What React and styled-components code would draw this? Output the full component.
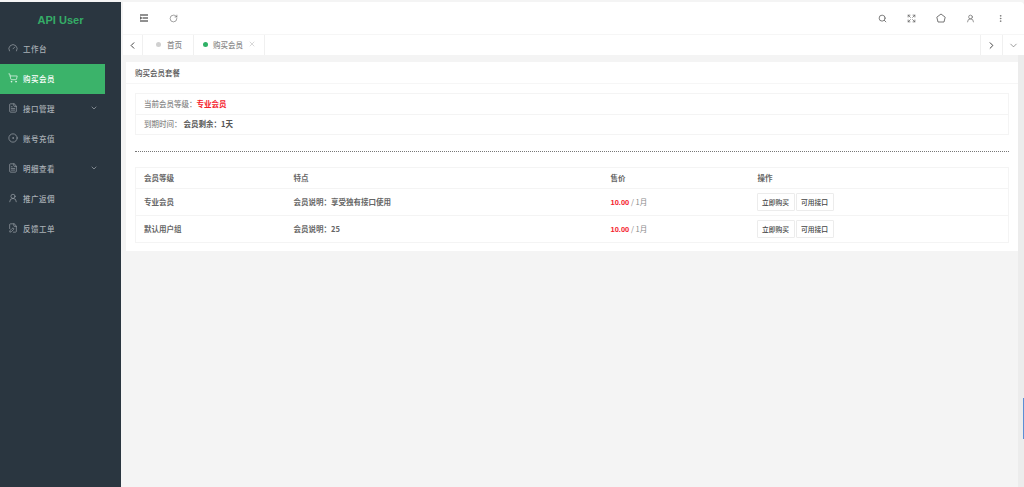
import React from 'react';
import styled, { createGlobalStyle } from 'styled-components';
import {
  ChevronDown,
  ChevronLeft,
  ChevronRight,
  Expand,
  EllipsisVertical,
  FileText,
  Gauge,
  RotateCw,
  Search,
  ShoppingCart,
  CircleDot,
  UserRound,
  FilePen,
  X,
} from 'lucide-react';

const GlobalStyle = createGlobalStyle`
  html, body {
    margin: 0;
    padding: 0;
    height: 100%;
    overflow: hidden;
    background: #f4f4f4;
    font-family: "Noto Sans CJK SC", "Liberation Sans", sans-serif;
  }
  * { box-sizing: border-box; }
`;

const menu = [
  { label: '工作台', icon: Gauge },
  { label: '购买会员', icon: ShoppingCart, active: true },
  { label: '接口管理', icon: FileText, arrow: true },
  { label: '账号充值', icon: CircleDot },
  { label: '明细查看', icon: FileText, arrow: true },
  { label: '推广返佣', icon: UserRound },
  { label: '反馈工单', icon: FilePen },
];

const plans = [
  { name: '专业会员', desc: '会员说明：享受独有接口使用' },
  { name: '默认用户组', desc: '会员说明：25' },
];

export default function App() {
  return (
    <Page>
      <GlobalStyle />
      <Sidebar>
        <Logo>API User</Logo>
        {menu.map((item) => (
          <MenuItem key={item.label} $active={item.active}>
            <item.icon size={10} strokeWidth={1.5} />
            <MenuLabel>{item.label}</MenuLabel>
            {item.arrow && <MenuArrow><ChevronDown size={8} /></MenuArrow>}
          </MenuItem>
        ))}
      </Sidebar>
      <Main>
        <Header>
          <HeaderGroup>
            <HeaderIcon $dark>
              <svg width="10" height="10" viewBox="0 0 10 10" fill="none" stroke="#222" strokeWidth="1">
                <path d="M1 2h8M3.5 5H9M1 8h8M1 3.8 2.6 5 1 6.2" />
              </svg>
            </HeaderIcon>
            <HeaderIcon $dark><RotateCw size={9} strokeWidth={1.2} /></HeaderIcon>
          </HeaderGroup>
          <HeaderGroup>
            <HeaderIcon><Search size={9} strokeWidth={2.2} /></HeaderIcon>
            <HeaderIcon><Expand size={9} strokeWidth={2} /></HeaderIcon>
            <HeaderIcon>
              <svg width="10" height="10" viewBox="0 0 10 10" fill="none" stroke="#666" strokeWidth="0.9">
                <path d="M5 1 9.2 4.2 8 9H2L.8 4.2Z" />
              </svg>
            </HeaderIcon>
            <HeaderIcon><UserRound size={9} strokeWidth={1.8} /></HeaderIcon>
            <HeaderIcon><EllipsisVertical size={9} strokeWidth={1.8} /></HeaderIcon>
          </HeaderGroup>
        </Header>
        <TabBar>
          <TabArrow><ChevronLeft size={11} strokeWidth={2} /></TabArrow>
          <Tab>
            <TabDot />
            首页
          </Tab>
          <Tab $active>
            <TabDot $active />
            购买会员
            <TabClose><X size={8} /></TabClose>
          </Tab>
          <TabSpacer />
          <TabArrow $right><ChevronRight size={11} strokeWidth={2} /></TabArrow>
          <TabArrow $right $muted><ChevronDown size={11} strokeWidth={1.4} /></TabArrow>
        </TabBar>
        <Content>
          <Card>
            <CardTitle>购买会员套餐</CardTitle>
            <CardBody>
              <InfoBox>
                <InfoRow>
                  当前会员等级：<Danger>专业会员</Danger>
                </InfoRow>
                <InfoRow>
                  到期时间：<InfoStrong>会员剩余：1天</InfoStrong>
                </InfoRow>
              </InfoBox>
              <Divider />
              <PlanTable>
                <thead>
                  <tr>
                    <HeadCell $w={150}>会员等级</HeadCell>
                    <HeadCell $w={317}>特点</HeadCell>
                    <HeadCell $w={147}>售价</HeadCell>
                    <HeadCell>操作</HeadCell>
                  </tr>
                </thead>
                <tbody>
                  {plans.map((plan) => (
                    <tr key={plan.name}>
                      <BodyCell>{plan.name}</BodyCell>
                      <BodyCell>{plan.desc}</BodyCell>
                      <BodyCell>
                        <Price>10.00</Price>
                        <Period> / 1月</Period>
                      </BodyCell>
                      <BodyCell>
                        <ActionRow>
                          <ActionButton>立即购买</ActionButton>
                          <ActionButton>可用接口</ActionButton>
                        </ActionRow>
                      </BodyCell>
                    </tr>
                  ))}
                </tbody>
              </PlanTable>
            </CardBody>
          </Card>
        </Content>
      </Main>
      <Scrollbar>
        <ScrollThumb />
      </Scrollbar>
    </Page>
  );
}

const Page = styled.div`
  display: flex;
  width: 1024px;
  height: 487px;
  padding-top: 2px;
  background: #f4f4f4;
  position: relative;
  overflow: hidden;
`;

const Sidebar = styled.aside`
  width: 121px;
  flex-shrink: 0;
  background: #2a3640;
  padding-right: 16px;
`;

const Logo = styled.div`
  height: 32px;
  width: 121px;
  padding-top: 4px;
  display: flex;
  align-items: center;
  justify-content: center;
  color: #35ad67;
  font-family: "Liberation Sans", sans-serif;
  font-size: 11px;
  font-weight: 700;
`;

const MenuItem = styled.div`
  height: 30px;
  display: flex;
  align-items: center;
  padding: 0 7px 2px 8px;
  color: ${({ $active }) => ($active ? '#ffffff' : '#a9afb5')};
  background: ${({ $active }) => ($active ? '#3bb36a' : 'transparent')};
  font-size: 7.5px;
  font-weight: 500;
`;

const MenuLabel = styled.span`
  margin-left: 5px;
  letter-spacing: 0.5px;
`;

const MenuArrow = styled.span`
  margin-left: auto;
  display: flex;
`;

const Main = styled.main`
  flex: 1;
  min-width: 0;
  margin-left: 1px;
  display: flex;
  flex-direction: column;
`;

const Header = styled.header`
  height: 32px;
  background: #ffffff;
  margin-left: 1px;
  border-radius: 0 4px 0 0;
  display: flex;
  align-items: center;
  justify-content: space-between;
  padding: 0 9px 0 6px;
`;

const HeaderGroup = styled.div`
  display: flex;
  align-items: center;
`;

const HeaderIcon = styled.span`
  width: 29.5px;
  height: 20px;
  display: flex;
  align-items: center;
  justify-content: center;
  color: ${({ $dark }) => ($dark ? '#333333' : '#666666')};
`;

const TabBar = styled.nav`
  height: 21px;
  margin-left: 1px;
  background: #ffffff;
  border-top: 1px solid #f6f6f6;
  display: flex;
  align-items: stretch;
`;

const TabArrow = styled.span`
  width: ${({ $right }) => ($right ? '22px' : '20px')};
  display: flex;
  align-items: center;
  justify-content: center;
  color: ${({ $muted }) => ($muted ? '#666666' : '#333333')};
  border-left: ${({ $right }) => ($right ? '1px solid #f0f0f0' : 'none')};
  border-right: ${({ $right }) => ($right ? 'none' : '1px solid #f0f0f0')};
`;

const Tab = styled.span`
  display: flex;
  align-items: center;
  padding: ${({ $active }) => ($active ? '0 8px 2px 9px' : '0 11px 2px 13px')};
  border-right: 1px solid #f0f0f0;
  color: #8a8a8a;
  font-size: 7.5px;
  font-weight: 500;
`;

const TabDot = styled.i`
  width: 5px;
  height: 5px;
  border-radius: 50%;
  margin-right: ${({ $active }) => ($active ? '5px' : '6px')};
  background: ${({ $active }) => ($active ? '#2fb166' : '#d0d0d0')};
`;

const TabClose = styled.span`
  display: flex;
  margin-left: 5px;
  color: #c4c4c4;
`;

const TabSpacer = styled.span`
  flex: 1;
`;

const Content = styled.div`
  flex: 1;
  padding: 7px 6px 0 4px;
`;

const Card = styled.section`
  background: #ffffff;
  height: 189px;
`;

const CardTitle = styled.div`
  height: 22px;
  padding-left: 9px;
  display: flex;
  align-items: center;
  border-bottom: 1px solid #f6f6f6;
  color: #555555;
  font-size: 7.5px;
  font-weight: 500;
`;

const CardBody = styled.div`
  padding: 9px 9px 0;
`;

const InfoBox = styled.div`
  border: 1px solid #f4f4f4;
`;

const InfoRow = styled.div`
  height: 20px;
  padding: 0 0 2px 8px;
  display: flex;
  align-items: center;
  color: #888888;
  font-size: 7.5px;
  font-weight: 500;
  & + & {
    border-top: 1px solid #f4f4f4;
  }
`;

const Danger = styled.span`
  color: #f5222d;
  font-weight: 700;
`;

const InfoStrong = styled.span`
  margin-left: 2px;
  color: #555555;
  font-weight: 700;
`;

const Divider = styled.div`
  margin: 16px 0 15px;
  border-top: 1px dotted #777777;
`;

const PlanTable = styled.table`
  width: 100%;
  border: 1px solid #f4f4f4;
  border-collapse: collapse;
  table-layout: fixed;
  font-size: 7.5px;
`;

const HeadCell = styled.th`
  width: ${({ $w }) => ($w ? `${$w}px` : 'auto')};
  height: 21px;
  padding: 0 8px 2px;
  text-align: left;
  color: #666666;
  font-weight: 700;
  border-bottom: 1px solid #f4f4f4;
`;

const BodyCell = styled.td`
  height: 27px;
  padding: 0 8px 1px;
  color: #666666;
  font-weight: 700;
  border-bottom: 1px solid #f4f4f4;
`;

const Price = styled.span`
  color: #f5222d;
  font-weight: 700;
  font-family: "Liberation Sans", sans-serif;
`;

const Period = styled.span`
  color: #888888;
  font-weight: 400;
`;

const ActionRow = styled.div`
  display: flex;
  gap: 1px;
  margin-left: -1px;
`;

const ActionButton = styled.button`
  width: 38px;
  height: 18px;
  padding: 0;
  background: #ffffff;
  border: 1px solid #ececec;
  border-radius: 1px;
  color: #444444;
  font-family: inherit;
  font-size: 6.75px;
  font-weight: 500;
`;

const Scrollbar = styled.div`
  position: absolute;
  right: 0;
  top: 55px;
  bottom: 0;
  width: 6px;
  background: #ececec;
`;

const ScrollThumb = styled.div`
  position: absolute;
  right: 0;
  top: 343px;
  width: 1px;
  height: 41px;
  background: #5b8fd6;
`;
